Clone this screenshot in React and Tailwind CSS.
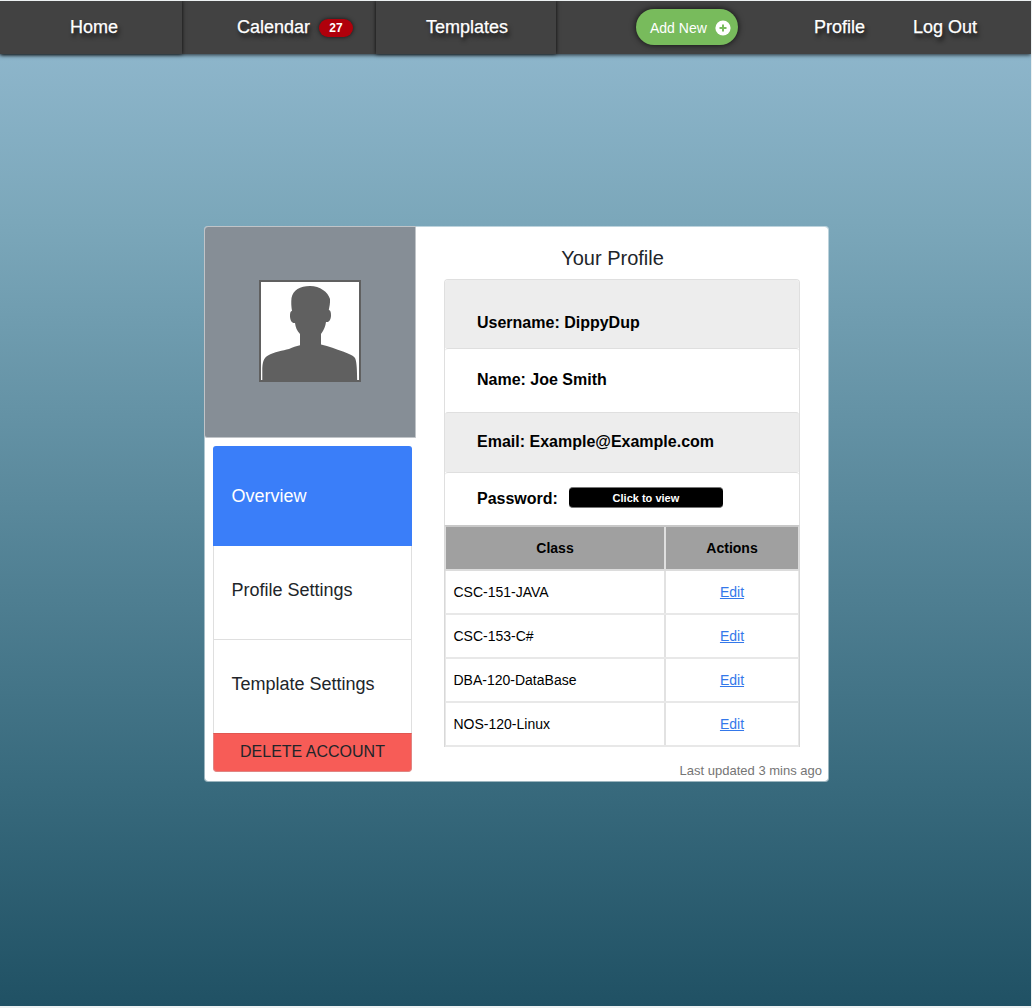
import React from "react";

const rows = ["CSC-151-JAVA", "CSC-153-C#", "DBA-120-DataBase", "NOS-120-Linux"];

const textShadow = "[text-shadow:2px_4px_4px_rgba(0,0,0,0.7)] [-webkit-text-stroke:0.25px_white]";

function Nav() {
  return (
    <nav className="relative flex h-[53px] items-start bg-[#424242] text-[18px] leading-[27px] text-white shadow-[0_1px_4px_rgba(0,0,0,0.75)]">
      <a className="flex h-[53px] w-[182px] justify-center pl-[6px] pt-[13px] shadow-[0_0_4px_rgba(0,0,0,0.9)]">
        <span className={textShadow}>Home</span>
      </a>
      <a className="flex h-[53px] w-[194px] pl-[55px] pt-[13px]">
        <span className={textShadow}>Calendar</span>
        <span className="ml-[9px] mt-[5px] flex h-[18px] w-[34px] items-center justify-center rounded-full bg-[#b0000b] text-[12px] font-bold leading-none shadow-[0_0_4px_rgba(0,0,0,0.7)]">
          27
        </span>
      </a>
      <a className="flex h-[53px] w-[180px] justify-center pl-[2px] pt-[13px] shadow-[0_0_4px_rgba(0,0,0,0.9)]">
        <span className={textShadow}>Templates</span>
      </a>
      <button className="ml-[80px] mt-[8px] flex h-[36px] w-[102px] items-center rounded-full bg-[#78bb5c] pl-[14px] text-[14px] leading-none shadow-[0_0_6px_rgba(0,0,0,0.8)]">
        <span className="pt-[2px]">Add New</span>
        <svg className="ml-[8px] mt-[2px] h-[16px] w-[16px]" viewBox="0 0 16 16">
          <circle cx="8" cy="8" r="7.6" fill="#fff" />
          <path d="M8 4.5v7M4.5 8h7" stroke="#78bb5c" strokeWidth="2" />
        </svg>
      </button>
      <a className="ml-[76px] pt-[13px]">
        <span className={textShadow}>Profile</span>
      </a>
      <a className="ml-[48px] pt-[13px]">
        <span className={textShadow}>Log Out</span>
      </a>
    </nav>
  );
}

function Avatar() {
  return (
    <div className="ml-[-1px] mt-[-1px] flex h-[212px] w-[212px] items-start rounded-tl-[4px] rounded-bl-[3px] border border-[#c0c4c8] bg-[#868e96] pl-[54px] pt-[53px]">
      <svg className="h-[102px] w-[102px]" viewBox="0 0 102 102">
        <rect x="1" y="1" width="100" height="100" fill="#fff" stroke="#606060" strokeWidth="2" />
        <path
          fill="#606060"
          d="M3.3 101V91C3.3 82 4.5 78 9 75.4C15 72 24 70.5 30 69C34 67.3 37 66 41 65.3V54C38 51 36.5 47 36 43C33 43.5 31.2 40.5 31 36.5C30.9 33 31.5 30.7 33 31C32.3 27 32 22 32.5 18C34 10 41 6 51 6C61 6 69 12 71 19C71.3 23 70.4 27 69.8 30C71.5 30 72.2 33 72 36C71.7 40 70 42.5 67 42C66.5 46 65 50 62 54V64.5C70 66 77 69.5 84 71.5C89 73.5 94 75 96 78C98 82 98 92 98.2 101Z"
        />
      </svg>
    </div>
  );
}

function Sidebar() {
  return (
    <div className="w-[211px]">
      <Avatar />
      <div className="ml-[8px] mt-[8px] w-[199px] text-[18px] leading-[27px] text-[#212529]">
        <div className="flex h-[100px] items-center rounded-t-[3px] bg-[#3a7ef9] pl-[18.5px] text-white">Overview</div>
        <div className="flex h-[94px] items-center border-x border-b border-[#dfdfdf] pb-[5px] pl-[17.5px]">
          Profile Settings
        </div>
        <div className="flex h-[93px] items-center border-x border-[#dfdfdf] pb-[4px] pl-[17.5px]">
          Template Settings
        </div>
        <div className="flex h-[39px] items-center justify-center rounded-b-[4px] border border-[#e08582] border-t-[#e05751] bg-[#f75c57] pb-[2px] text-[16px] leading-[24px]">
          DELETE ACCOUNT
        </div>
      </div>
    </div>
  );
}

function Details() {
  return (
    <div className="ml-[28px] w-[356px]">
      <h1 className="ml-[-19px] mt-[16px] text-center text-[20px] leading-[30px] text-[#212529]">Your Profile</h1>
      <div className="mt-[6px] rounded-t-[4px] border border-b-0 border-[#dfdfdf] text-[16px] font-bold leading-[24px] text-black">
        <div className="h-[68px] rounded-t-[3px] bg-[#ededed] pl-[32px] pt-[31px]">Username: DippyDup</div>
        <div className="h-[64px] rounded-t-[3px] border-t border-[#dfdfdf] bg-white pl-[32px] pt-[19px]">Name: Joe Smith</div>
        <div className="h-[60px] rounded-t-[3px] border-t border-[#dfdfdf] bg-[#ededed] pl-[32px] pt-[17px]">
          Email: Example@Example.com
        </div>
        <div className="flex h-[53px] rounded-t-[3px] border-t border-[#dfdfdf] bg-white pl-[32px] pt-[14px]">
          Password:
          <button className="ml-[11px] flex h-[21px] w-[154px] items-center justify-center rounded-[4px] border-y border-[#767676] bg-black pt-[2px] text-[11px] leading-none text-white">
            Click to view
          </button>
        </div>
      </div>
      <div className="border-x border-[#d8d8d8] text-[14px] leading-[20px] text-black">
        <div className="flex h-[46px] border border-y-2 border-[#dcdcdc] border-t-[#c8c8c8] bg-[#a0a0a0] font-bold">
          <div className="flex w-[220px] items-center justify-center border-r-2 border-[#dfdfdf]">Class</div>
          <div className="flex flex-1 items-center justify-center">Actions</div>
        </div>
        {rows.map((name) => (
          <div key={name} className="flex h-[44px] border-x border-b-2 border-[#e8e8e8]">
            <div className="flex w-[220px] items-center border-r-2 border-[#e2e2e2] pl-[7.5px]">{name}</div>
            <div className="flex flex-1 items-center justify-center">
              <a className="text-[#3478ea] underline">Edit</a>
            </div>
          </div>
        ))}
      </div>
      <p className="mr-[-22px] mt-[14px] text-right text-[13px] leading-[20px] text-[#757575]">Last updated 3 mins ago</p>
    </div>
  );
}

export default function App() {
  return (
    <div className="h-[1008px] w-[1032px] bg-[#edf1f2] pb-[2px] pr-px pt-px font-['Liberation_Sans',Arial,sans-serif]">
      <div className="h-[1005px] overflow-hidden bg-[linear-gradient(to_bottom,#93bad0_0%,#7ba7ba_22%,#386a7d_78%,#205164_100%)]">
        <Nav />
        <main className="ml-[204px] mt-[172px] flex h-[556px] w-[625px] rounded-[4px] border border-white/50 bg-white bg-clip-padding">
          <Sidebar />
          <Details />
        </main>
      </div>
    </div>
  );
}
